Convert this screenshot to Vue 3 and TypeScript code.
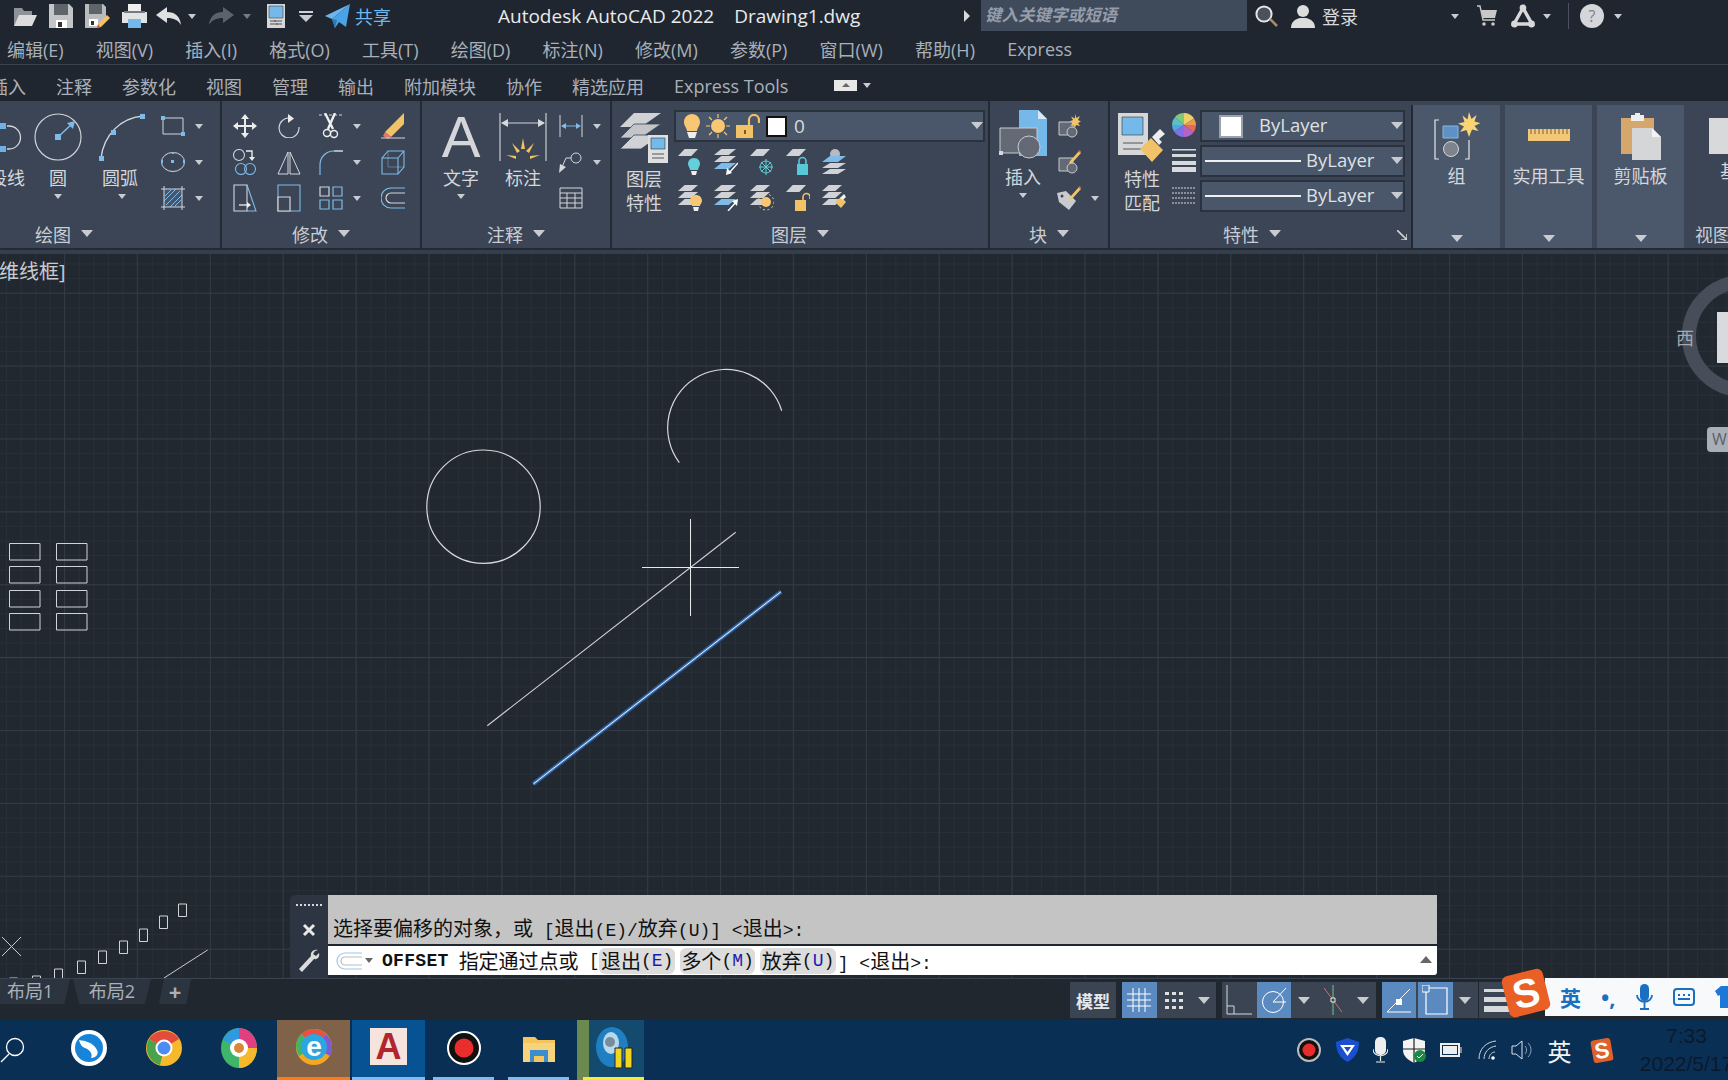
<script setup lang="ts">
const menus = ['编辑(E)', '视图(V)', '插入(I)', '格式(O)', '工具(T)', '绘图(D)', '标注(N)', '修改(M)', '参数(P)', '窗口(W)', '帮助(H)', 'Express']
const tabs = ['插入', '注释', '参数化', '视图', '管理', '输出', '附加模块', '协作', '精选应用', 'Express Tools']
const stairs = [[182, 910], [163, 922], [143, 935], [123, 947], [102, 957], [81, 967], [58, 975], [36, 982], [13, 984]]
const benches = [543, 566, 590, 613]
</script>

<template>
  <div class="page">
    <svg class="defs" width="0" height="0">
      <defs>
        <symbol id="para" viewBox="0 0 24 9" preserveAspectRatio="none"><path d="M8 0h16l-8 9H0z" fill="currentColor" /></symbol>
      </defs>
    </svg>

    <header class="titlebar">
      <div class="quick">
        <svg width="24" height="22" viewBox="0 0 24 22"><path d="M1 21V3h8l2 3h8v4H7z" fill="#8d9298" /><path d="M6 10h18l-5 11H1z" fill="#dcdcdc" /></svg>
        <svg width="24" height="24" viewBox="0 0 24 24"><path d="M0 0h20l4 4v20H0z" fill="#c3c5c8" /><path d="M5 0h14v11H5z" fill="#5f646b" /><path d="M7 16h11v8H7z" fill="#fff" /><path d="M9 18h4v5H9z" fill="#333" /></svg>
        <svg width="25" height="24" viewBox="0 0 25 24"><path d="M0 0h18l3 3v11l-9 10H0z" fill="#b9bbbe" /><path d="M4 0h13v10H4z" fill="#5f646b" /><path d="M4 15h9v7H4z" fill="#fff" /><path d="M6 17h3v4H6z" fill="#333" /><path d="M22 11l3 3-9 9-4 1 1-4z" fill="#f2c268" /><path d="M15 23l-3 1 1-4z" fill="#d9534f" /></svg>
        <svg width="25" height="24" viewBox="0 0 25 24"><path d="M6 0h13v7H6z" fill="#eee" /><path d="M0 8h25v11H0z" fill="#e2e3e5" /><path d="M6 15h13v9H6z" fill="#75b9ea" /><path d="M2 7h21v2H2z" fill="#77797c" /></svg>
        <div class="undo">
          <svg width="25" height="20" viewBox="0 0 25 20"><path d="M0 9 11 1v5c8 0 13 4 14 13-3-5-7-7-14-7v5z" fill="#dfe0e2" /></svg>
          <i class="caret sm" />
        </div>
        <div class="redo">
          <svg width="25" height="20" viewBox="0 0 25 20"><path d="M25 9 14 1v5C6 6 1 10 0 19c3-5 7-7 14-7v5z" fill="#5b626b" /></svg>
          <i class="caret sm dim" />
        </div>
        <svg width="18" height="24" viewBox="0 0 18 24"><path d="M0 0h18v24H0z" fill="#d6d7d9" /><path d="M2 2h14v12H2z" fill="#75b9ea" stroke="#444" stroke-width=".6" /><path d="M3 17h12M3 20h12" stroke="#555" stroke-width="1" /><path d="M8 16v2M10 19v2" stroke="#555" /></svg>
        <div class="qa-drop"><i class="bar" /><i class="caret" /></div>
        <svg width="25" height="24" viewBox="0 0 25 24"><path d="M25 0 0 12l7 3z" fill="#6cb8ee" /><path d="M25 0 7 15l3 9 4-6 7 5z" fill="#4aa3e6" /><path d="M7 15l3 9 2-8z" fill="#2d77b4" /></svg>
        <span class="share">共享</span>
      </div>
      <div class="doc">
        <span>Autodesk AutoCAD 2022</span>
        <span>Drawing1.dwg</span>
        <i class="play" />
      </div>
      <div class="search">键入关键字或短语</div>
      <div class="account">
        <svg class="mag" width="24" height="22" viewBox="0 0 24 22"><circle cx="9" cy="9" r="7.6" fill="#4a525d" stroke="#e6e6e6" stroke-width="2" /><path d="M15 14l7 7" stroke="#a98b66" stroke-width="2.5" /></svg>
        <svg class="user" width="24" height="24" viewBox="0 0 24 24"><circle cx="12" cy="7" r="6" fill="#dcdcdc" /><path d="M0 24c0-6 4-9 9-10h6c5 1 9 4 9 10z" fill="#dcdcdc" /></svg>
        <span class="login">登录</span>
        <i class="caret sm login-caret" />
        <svg class="cart" width="20" height="22" viewBox="0 0 20 22"><path d="M0 1h3l3 14h12" fill="none" stroke="#c8c8c8" stroke-width="1.4" /><path d="M4 5h16l-2 8H6z" fill="#c8c8c8" /><circle cx="7" cy="19" r="1.8" fill="#c8c8c8" /><circle cx="16" cy="19" r="1.8" fill="#c8c8c8" /></svg>
        <svg class="tri" width="24" height="24" viewBox="0 0 24 24"><path d="M12 4 3 20h18z" fill="none" stroke="#d8d8d8" stroke-width="3.4" /><circle cx="12" cy="4" r="3.4" fill="#d8d8d8" /><circle cx="3.5" cy="20" r="3.4" fill="#d8d8d8" /><circle cx="20.5" cy="20" r="3.4" fill="#d8d8d8" /></svg>
        <i class="caret sm tri-caret" />
        <i class="sep" />
        <div class="help">?</div>
        <i class="caret sm help-caret" />
      </div>
    </header>

    <nav class="menubar">
      <span v-for="m in menus" :key="m">{{ m }}</span>
    </nav>

    <nav class="tabbar">
      <span v-for="t in tabs" :key="t">{{ t }}</span>
      <i class="tab-toggle" />
      <i class="caret sm" />
    </nav>

    <section class="ribbon">
      <div class="panel draw">
        <div class="panel-body">
          <div class="big first">
            <svg width="48" height="48" viewBox="0 0 48 48"><path d="M24 13h2a11.500 11.500 0 0 1 0 23h-2" fill="none" stroke="#d5d8dc" stroke-width="1.300" /><path d="M17 10h6v6h-6zM17 33h6v6h-6z" fill="#6fb1e4" /></svg>
            <span class="lbl">段线</span>
          </div>
          <div class="big">
            <svg width="48" height="48" viewBox="0 0 48 48"><circle cx="24" cy="24" r="23" fill="none" stroke="#cfd3d8" stroke-width="1.200" /><path d="M24 24 39 10" stroke="#7fbbe8" stroke-width="1.500" /><path d="M41 8l-8 2 6 6z" fill="#7fbbe8" /><path d="M21 21h6v6h-6z" fill="#7fbbe8" /></svg>
            <span class="lbl">圆</span>
            <i class="caret sm" />
          </div>
          <div class="big arc">
            <svg width="48" height="48" viewBox="0 0 48 48"><path d="M3 45C6 22 22 5 45 3" fill="none" stroke="#d5d8dc" stroke-width="1.400" /><path d="M1 43h5v5H1zM13 17h5v5h-5zM42 1h5v5h-5z" fill="#7fbbe8" /></svg>
            <span class="lbl">圆弧</span>
            <i class="caret sm" />
          </div>
          <div class="tiny-col">
            <div class="tiny">
              <svg width="24" height="24" viewBox="0 0 24 24"><path d="M2 4h20v16H2z" fill="none" stroke="#d5d8dc" /><path d="M0 2h4v4H0zM20 18h4v4h-4z" fill="#7fbbe8" /></svg>
              <i class="caret sm" />
            </div>
            <div class="tiny">
              <svg width="24" height="24" viewBox="0 0 24 24"><ellipse cx="12" cy="12" rx="11.500" ry="9.500" fill="none" stroke="#d5d8dc" /><path d="M10 10h3v3h-3zM0 10h2v3H0zM11 2h2v2h-2zM22 10h2v3h-2z" fill="#7fbbe8" /></svg>
              <i class="caret sm" />
            </div>
            <div class="tiny">
              <svg width="24" height="24" viewBox="0 0 24 24"><path d="M3 3h18v18H3z" fill="#47566a" /><path d="M5 19 19 5M3 15 15 3M9 21 21 9M4 10l6-6M14 20l6-6" stroke="#7fbbe8" /><path d="M0 3h24M0 21h24M3 0v24M21 0v24" stroke="#d5d8dc" /></svg>
              <i class="caret sm" />
            </div>
          </div>
        </div>
        <div class="panel-title draw-title"><span>绘图</span><i class="caret" /></div>
      </div>

      <div class="panel modify">
        <div class="panel-body">
          <div class="tools">
            <svg width="24" height="24" viewBox="0 0 24 24"><path d="M12 0l4 5h-3v6h6V8l5 4-5 4v-3h-6v6h3l-4 5-4-5h3v-6H5v3l-5-4 5-4v3h6V5H8z" fill="#ececec" /></svg>
            <svg width="24" height="24" viewBox="0 0 24 24"><path d="M13 4a10 10 0 1 0 9 9" fill="none" stroke="#cfd3d8" stroke-width="1.200" /><path d="M11 0l6 4.500-6 4.500z" fill="#ececec" /></svg>
            <div class="with-caret">
              <svg width="24" height="26" viewBox="0 0 24 26"><path d="M0 2h24" stroke="#d5d8dc" stroke-dasharray="3 2" /><path d="M6 0l8 16M16 0 9 16" stroke="#f0f0f0" stroke-width="2.400" /><circle cx="8" cy="20" r="3.500" fill="none" stroke="#f0f0f0" stroke-width="1.400" /><circle cx="15" cy="21" r="3.500" fill="none" stroke="#f0f0f0" stroke-width="1.400" /></svg>
              <i class="caret sm" />
            </div>
            <svg width="24" height="26" viewBox="0 0 24 26"><path d="M23 0v11L10 24l-6-5z" fill="#f2c268" /><path d="M4 19l6 5-3 2-5-3z" fill="#e27770" /><path d="M0 25h24" stroke="#d5d8dc" /></svg>

            <svg width="24" height="26" viewBox="0 0 24 26"><circle cx="6" cy="6" r="5.500" fill="none" stroke="#cfd3d8" stroke-width="1.100" /><path d="M13 2h6v6" fill="none" stroke="#ececec" stroke-width="1.400" /><path d="M16 8h6l-3 4z" fill="#ececec" /><circle cx="8" cy="20" r="5.500" fill="none" stroke="#7fbbe8" stroke-width="1.100" /><circle cx="17" cy="20" r="5.500" fill="none" stroke="#7fbbe8" stroke-width="1.100" /></svg>
            <svg width="24" height="26" viewBox="0 0 24 26"><path d="M1 25 11 3v22zM13 3l10 22H13z" fill="none" stroke="#d5d8dc" /></svg>
            <div class="with-caret">
              <svg width="24" height="26" viewBox="0 0 24 26"><path d="M1 26V16C1 8 7 2 15 2h9" fill="none" stroke="#7fbbe8" stroke-width="1.200" /><path d="M15 2h9" stroke="#d5d8dc" stroke-width="1.200" /></svg>
              <i class="caret sm" />
            </div>
            <svg width="24" height="26" viewBox="0 0 24 26"><path d="M1 9h16v16H1zM1 9l6-7h16v16l-6 7M17 9l6-7" fill="none" stroke="#7fbbe8" stroke-width="1.100" /><path d="M7 2v16H23" fill="none" stroke="#a4c8e4" stroke-width=".4" /></svg>

            <svg width="24" height="28" viewBox="0 0 24 28"><path d="M1 1h13v26H1z" fill="none" stroke="#d5d8dc" stroke-width="1.100" /><path d="M14 1l9 26H14" fill="none" stroke="#7fbbe8" stroke-width="1.100" /><path d="M6 21h10" stroke="#f0f0f0" stroke-width="1.300" /><path d="M14 18l4 3-4 3z" fill="#f0f0f0" /></svg>
            <svg width="24" height="28" viewBox="0 0 24 28"><path d="M1 1h22v26H1z" fill="none" stroke="#7fbbe8" stroke-width="1.100" /><path d="M1 13h12v14H1z" fill="#3c4656" stroke="#d5d8dc" stroke-width="1.200" /></svg>
            <div class="with-caret">
              <svg width="24" height="24" viewBox="0 0 24 24"><path d="M14 1h9v9h-9zM1 14h9v9H1zM14 14h9v9h-9z" fill="none" stroke="#7fbbe8" stroke-width="1.200" /><path d="M1 1h9v9H1z" fill="none" stroke="#d5d8dc" stroke-width="1.200" /></svg>
              <i class="caret sm" />
            </div>
            <svg width="24" height="22" viewBox="0 0 24 22"><path d="M24 1H10a10 10 0 0 0 0 20h14" fill="none" stroke="#7fbbe8" stroke-width="1.200" /><path d="M24 6H10a5 5 0 0 0 0 10h14" fill="none" stroke="#d5d8dc" stroke-width="1.200" /></svg>
          </div>
        </div>
        <div class="panel-title"><span>修改</span><i class="caret" /></div>
      </div>

      <div class="panel annotate">
        <div class="panel-body">
          <div class="big text-tool">
            <div class="letter">A</div>
            <span class="lbl">文字</span>
            <i class="caret sm" />
          </div>
          <div class="big">
            <svg width="48" height="48" viewBox="0 0 48 48"><path d="M1 0v48M47 0v48M3 10h42" stroke="#d5d8dc" stroke-width="1.100" /><path d="M2 10l7-4v8zM46 10l-7-4v8z" fill="#d5d8dc" /><path d="M24 25l2 11h-4zM13 30l8 8-3 2zM35 30l-8 8 3 2zM7 42l10 1v3zM41 42l-10 1v3z" fill="#f2c268" /></svg>
            <span class="lbl">标注</span>
          </div>
          <div class="tiny-col gap12">
            <div class="tiny">
              <svg width="24" height="24" viewBox="0 0 24 24"><path d="M1 1v22M23 1v22" stroke="#d5d8dc" /><path d="M3 12h18" stroke="#7fbbe8" /><path d="M2 12l5-3v6zM22 12l-5-3v6z" fill="#7fbbe8" /></svg>
              <i class="caret sm" />
            </div>
            <div class="tiny">
              <svg width="24" height="24" viewBox="0 0 24 24"><circle cx="17" cy="8" r="5" fill="none" stroke="#d5d8dc" /><path d="M12 8H7L3 17" fill="none" stroke="#d5d8dc" /><path d="M0 23l1-9 6 3z" fill="#d5d8dc" /></svg>
              <i class="caret sm" />
            </div>
            <div class="tiny">
              <svg width="24" height="24" viewBox="0 0 24 24"><path d="M1 2h22v20H1zM1 7h22M1 12h22M1 17h22M8 7v15M16 7v15" fill="none" stroke="#d5d8dc" /></svg>
            </div>
          </div>
        </div>
        <div class="panel-title"><span>注释</span><i class="caret" /></div>
      </div>

      <div class="panel layers">
        <div class="panel-body">
          <div class="big stacked">
            <svg width="48" height="50" viewBox="0 0 48 50"><path d="M14 0h27L21 14H0z" fill="#d0d2d5" /><path d="M14 11h27L21 25H0z" fill="#c3c5c9" stroke="#3b4555" stroke-width=".8" /><path d="M14 22h27L21 36H0z" fill="#d0d2d5" stroke="#3b4555" stroke-width=".8" /><path d="M28 22h20v28H28z" fill="#dedfe1" /><path d="M31 25h14v11H31z" fill="#75b9ea" stroke="#333" stroke-width=".6" /><path d="M32 41h12M32 45h12" stroke="#555" /></svg>
            <span class="lbl">图层<br>特性</span>
          </div>
          <div class="layer-side">
            <div class="combo layer-combo">
              <svg width="16" height="24" viewBox="0 0 16 24"><path d="M8 0c5 0 8 4 8 8 0 4-3 6-3 9H3c0-3-3-5-3-9 0-4 3-8 8-8z" fill="#f7c774" /><path d="M3 18h10l-2 6H5z" fill="#eee" /></svg>
              <svg width="24" height="24" viewBox="0 0 24 24"><circle cx="12" cy="12" r="7" fill="#f7c774" /><path d="M12 0v4M12 20v4M0 12h4M20 12h4M3 3l3 3M18 18l3 3M21 3l-3 3M6 18l-3 3" stroke="#f7c774" stroke-width="1.200" /></svg>
              <svg width="24" height="24" viewBox="0 0 24 24"><path d="M0 11h17v13H0z" fill="#f2c268" /><path d="M8 16h2v4H8z" fill="#7d5b1f" /><path d="M13 11V6a5 5 0 0 1 10 0v3" fill="none" stroke="#f2c268" stroke-width="2.200" /></svg>
              <i class="swatch" />
              <span class="layer-name">0</span>
              <i class="caret combo-caret" />
            </div>
            <div class="layer-grid">
              <svg width="24" height="26" viewBox="0 0 24 26"><use href="#para" width="20" height="7" color="#d0d2d5" /><path d="M16 9c4 0 6 3 6 6 0 2-2 4-2 6h-8c0-2-2-4-2-6 0-3 2-6 6-6z" fill="#63d0d9" /><path d="M13 22h6l-1 4h-4z" fill="#eee" /></svg>
              <svg width="24" height="26" viewBox="0 0 24 26"><use href="#para" width="22" height="6" color="#d0d2d5" /><use href="#para" y="7" width="22" height="6" color="#d0d2d5" /><use href="#para" y="14" width="22" height="6" color="#7fbbe8" /><path d="M24 14 15 24" stroke="#fff" stroke-width="1.400" /><path d="M12 26l1-7 5 5z" fill="#fff" /></svg>
              <svg width="24" height="26" viewBox="0 0 24 26"><use href="#para" width="20" height="7" color="#d0d2d5" /><circle cx="16" cy="18" r="6" fill="none" stroke="#5ed0d8" /><path d="M16 10v16M9 18h14M11 13l10 10M21 13 11 23" stroke="#5ed0d8" /></svg>
              <svg width="24" height="26" viewBox="0 0 24 26"><use href="#para" width="20" height="7" color="#d0d2d5" /><path d="M11 15h11v11H11z" fill="#58c7d6" /><path d="M13 15v-3a3.500 3.500 0 0 1 7 0v3" fill="none" stroke="#58c7d6" stroke-width="1.600" /></svg>
              <svg width="24" height="26" viewBox="0 0 24 26"><circle cx="13" cy="5" r="5" fill="#b7bbc1" /><use href="#para" y="7" width="24" height="6" color="#7fbbe8" /><use href="#para" y="14" width="24" height="5" color="#d0d2d5" /><use href="#para" y="20" width="24" height="5" color="#d0d2d5" /></svg>

              <svg width="24" height="26" viewBox="0 0 24 26"><use href="#para" width="20" height="6" color="#d0d2d5" /><use href="#para" y="7" width="20" height="6" color="#d0d2d5" /><use href="#para" y="14" width="20" height="6" color="#d0d2d5" /><path d="M18 10c3 0 6 2 6 6 0 2-2 3-2 5h-8c0-2-2-3-2-5 0-4 3-6 6-6z" fill="#f7c774" /><path d="M15 22h6l-1 4h-4z" fill="#eee" /></svg>
              <svg width="24" height="26" viewBox="0 0 24 26"><use href="#para" width="22" height="6" color="#d0d2d5" /><use href="#para" y="7" width="22" height="6" color="#d0d2d5" /><use href="#para" y="14" width="22" height="6" color="#7fbbe8" /><path d="M14 26 23 16" stroke="#fff" stroke-width="1.400" /><path d="M24 14l-1 7-5-5z" fill="#fff" /></svg>
              <svg width="24" height="26" viewBox="0 0 24 26"><use href="#para" width="20" height="6" color="#d0d2d5" /><use href="#para" y="7" width="20" height="6" color="#d0d2d5" /><use href="#para" y="14" width="20" height="6" color="#d0d2d5" /><circle cx="16" cy="17" r="5" fill="#f7c774" /><circle cx="16" cy="17" r="8" fill="none" stroke="#f7c774" stroke-dasharray="2 2.500" /></svg>
              <svg width="24" height="26" viewBox="0 0 24 26"><use href="#para" width="20" height="7" color="#d0d2d5" /><path d="M9 15h11v11H9z" fill="#f2c268" /><path d="M17 15v-3a3.500 3.500 0 0 1 7 0v2" fill="none" stroke="#f2c268" stroke-width="1.600" /></svg>
              <svg width="24" height="26" viewBox="0 0 24 26"><use href="#para" width="20" height="6" color="#d0d2d5" /><use href="#para" y="7" width="20" height="6" color="#d0d2d5" /><use href="#para" y="14" width="20" height="6" color="#d0d2d5" /><path d="M13 17l6-5 5 5-5 6z" fill="#f2c268" /><path d="M18 13l4-4 2 3-3 3z" fill="#f0f0f0" /></svg>
            </div>
          </div>
        </div>
        <div class="panel-title"><span>图层</span><i class="caret" /></div>
      </div>

      <div class="panel blocks">
        <div class="panel-body">
          <div class="big insert">
            <svg width="48" height="50" viewBox="0 0 48 50"><path d="M20 0h19l9 9v37H20z" fill="#75b9ea" /><path d="M39 0l9 9h-9z" fill="#d7e9f7" /><path d="M1 18h37v25H1z" fill="#646a75" stroke="#c8ccd1" /><circle cx="30" cy="37" r="11" fill="#646a75" stroke="#c8ccd1" /><path d="M0 41h4v4H0z" fill="#d5d8dc" /></svg>
            <span class="lbl">插入</span>
            <i class="caret sm" />
          </div>
          <div class="tiny-col block-col">
            <div class="tiny">
              <svg width="24" height="24" viewBox="0 0 24 24"><path d="M2 8h14v13H2z" fill="#646a75" stroke="#c8ccd1" /><circle cx="15" cy="18" r="5" fill="#646a75" stroke="#c8ccd1" /><path d="M18 0l1.500 4 3.500-2-2 4 3 1.500-3 1.500 2 3-4-1-1 3-1.500-3-3 1 2-3.500-3-1 3.500-1.500-2-3.500 4 2z" fill="#f2c268" /></svg>
            </div>
            <div class="tiny">
              <svg width="24" height="24" viewBox="0 0 24 24"><path d="M2 8h14v13H2z" fill="#646a75" stroke="#c8ccd1" /><circle cx="15" cy="18" r="5" fill="#646a75" stroke="#c8ccd1" /><path d="M22 1l2 2-9 10-3 1 1-3z" fill="#f2c268" /><path d="M21 1l2-1 1 2-1 1z" fill="#d9605a" /></svg>
            </div>
            <div class="tiny">
              <svg width="24" height="24" viewBox="0 0 24 24"><path d="M0 7 9 5l10 10-7 9-10-8z" fill="#c9cbce" /><circle cx="5" cy="10" r="1.500" fill="#3b4555" /><path d="M22 1l2 2-9 10-3 1 1-3z" fill="#f2c268" /><path d="M21 1l2-1 1 2-1 1z" fill="#d9605a" /></svg>
              <i class="caret sm" />
            </div>
          </div>
        </div>
        <div class="panel-title"><span>块</span><i class="caret" /></div>
      </div>

      <div class="panel props">
        <div class="panel-body">
          <div class="big stacked">
            <svg width="48" height="50" viewBox="0 0 48 50"><path d="M0 0h30v42H0z" fill="#d6d7d9" /><path d="M4 4h21v18H4z" fill="#75b9ea" stroke="#333" stroke-width=".6" /><path d="M5 30h20M5 36h20" stroke="#555" /><path d="M22 36l11-11 12 12-11 12z" fill="#f2c268" /><path d="M34 24l8-8 5 5-6 5 3 3-3 3z" fill="#eee" /></svg>
            <span class="lbl">特性<br>匹配</span>
          </div>
          <div class="prop-icons">
            <svg width="24" height="24" viewBox="0 0 24 24"><path d="M12 12V0a12 12 0 0 1 10 5.500z" fill="#ecd26a" /><path d="M12 12l10-6.500A12 12 0 0 1 24 12z" fill="#ec9a4c" /><path d="M12 12h12a12 12 0 0 1-2.500 7.500z" fill="#e56a5b" /><path d="M12 12l9.500 7.500A12 12 0 0 1 12 24z" fill="#b364c9" /><path d="M12 12v12A12 12 0 0 1 2 18.500z" fill="#7f70e6" /><path d="M12 12 2 18.500A12 12 0 0 1 0 12z" fill="#57a3e8" /><path d="M12 12H0A12 12 0 0 1 3 4z" fill="#5bc1c8" /><path d="M12 12 3 4a12 12 0 0 1 9-4z" fill="#7fca79" /></svg>
            <svg width="24" height="24" viewBox="0 0 24 24"><path d="M0 1h24v1.500H0zM0 6h24v3H0zM0 13h24v4H0zM0 19h24v5H0z" fill="#d8d9db" /></svg>
            <svg width="24" height="18" viewBox="0 0 24 18"><path d="M0 1h24M0 6h24M0 11h24M0 16h24" stroke="#d8d9db" stroke-dasharray="2 1" /></svg>
          </div>
          <div class="prop-combos">
            <div class="combo prop-combo">
              <i class="swatch wide" />
              <span class="by first-by">ByLayer</span>
              <i class="caret combo-caret" />
            </div>
            <div class="combo prop-combo">
              <i class="line-sample" />
              <span class="by">ByLayer</span>
              <i class="caret combo-caret" />
            </div>
            <div class="combo prop-combo">
              <i class="line-sample" />
              <span class="by">ByLayer</span>
              <i class="caret combo-caret" />
            </div>
          </div>
        </div>
        <div class="panel-title props-title">
          <span>特性</span><i class="caret" />
          <svg class="launcher" width="10" height="10" viewBox="0 0 10 10"><path d="M0 0l10 10M10 4v6H4" fill="none" stroke="#cfd3d8" stroke-width="1.600" /></svg>
        </div>
      </div>

      <div class="collapsed">
        <svg width="46" height="48" viewBox="0 0 46 48"><path d="M5 8H1v39h4M31 47h4V28" fill="none" stroke="#e6e6e6" stroke-width="1.200" /><path d="M9 14h15v12H9z" fill="#5e92c4" stroke="#86b6e0" /><circle cx="17" cy="37" r="7.500" fill="#7e838c" stroke="#d5d8dc" /><path d="M35 0l2.500 7 5-4-2 6.500 6 1.500-6 3 4 5-6.500-1.500L35 25l-2.500-7-6.500 2 4-5.500-6-3 6.500-1.500-2-6.500 5 4z" fill="#f9d477" /></svg>
        <span class="lbl">组</span>
        <i class="caret" />
      </div>
      <div class="collapsed">
        <svg class="ruler" width="44" height="48" viewBox="0 0 44 48"><path d="M1 17h42v12H1z" fill="#f2c876" /><path d="M4 17v5M8 17v5M12 17v5M16 17v5M20 17v5M24 17v5M28 17v5M32 17v5M36 17v5M40 17v5" stroke="#7a6334" /></svg>
        <span class="lbl">实用工具</span>
        <i class="caret" />
      </div>
      <div class="collapsed">
        <svg width="40" height="48" viewBox="0 0 40 48"><path d="M0 6h33v36H0z" fill="#d5a76c" /><path d="M10 3h13v6H10z" fill="#eee" /><path d="M14 1h5v4h-5z" fill="#eee" /><path d="M11 16h20l9 9v23H11z" fill="#d4d6d8" /><path d="M31 16l9 9h-9z" fill="#f2f2f2" /></svg>
        <span class="lbl">剪贴板</span>
        <i class="caret" />
      </div>
      <div class="panel last">
        <div class="panel-body">
          <div class="big">
            <i class="white-block" />
            <span class="lbl">基</span>
          </div>
        </div>
        <div class="panel-title"><span>视图</span></div>
      </div>
    </section>

    <div class="strip" />

    <main class="canvas">
      <svg class="drawing" width="1728" height="724" viewBox="0 254 1728 724">
        <path d="M0 657.500h1728" stroke="#5d2e33" />
        <circle cx="483.500" cy="506.700" r="56.700" fill="none" stroke="#d7d9dc" stroke-width="1.200" />
        <path d="M679.300 462.700A58.300 58.300 0 1 1 781.700 410.700" fill="none" stroke="#d7d9dc" stroke-width="1.200" />
        <path d="M487.300 725.700 735.700 532.300" stroke="#d0d2d5" stroke-width="1.100" />
        <path d="M533.300 784 781 591.700" stroke="#26456f" stroke-width="5" />
        <path d="M533.300 784 781 591.700" stroke="#3f74b6" stroke-width="3" />
        <path d="M533.300 784 781 591.700" stroke="#e6f2ff" stroke-width="1" />
        <path d="M642 567.500h97M690.500 519v97" stroke="#e6e8ea" />
        <template v-for="y in benches" :key="y">
          <path :d="`M9.500 ${y}.5H40V${y + 17}H9.500z`" fill="none" stroke="#d0d3d7" />
          <path :d="`M56.500 ${y}.5H87V${y + 17}H56.500z`" fill="none" stroke="#d0d3d7" />
        </template>
        <path v-for="s in stairs" :key="s[0]" :d="`M${s[0] - 3.5} ${s[1] - 6}h8v12.500h-8z`" fill="none" stroke="#d0d3d7" />
        <path d="M2 937 21 956M21 937 2 956M164 978 207.600 950" stroke="#c9ccd0" />
      </svg>
      <div class="view-label">二维线框]</div>
      <div class="cube-ring" />
      <div class="cube-west">西</div>
      <div class="cube-face" />
      <div class="wcs">W</div>

      <div class="command">
        <div class="cmd-handle">
          <i class="dots" />
          <svg width="14" height="14" viewBox="0 0 14 14"><path d="M2 2l10 10M12 2 2 12" stroke="#e8e8e8" stroke-width="3" /></svg>
          <svg width="22" height="24" viewBox="0 0 22 24"><path d="M20 1c-4-1-8 2-7 6L1 20l3 3L16 10c4 1 6-3 5-6l-3 3-3-2 2-3z" fill="#dcdcdc" /></svg>
        </div>
        <div class="cmd-main">
          <div class="cmd-history"><span class="cn">选择要偏移的对象，或</span> [<span class="cn">退出</span>(E)/<span class="cn">放弃</span>(U)] &lt;<span class="cn">退出</span>&gt;:</div>
          <div class="cmd-input">
            <svg width="27" height="18" viewBox="0 0 27 18"><path d="M27 1H10a8 8 0 0 0 0 16h17" fill="none" stroke="#9cc8ea" stroke-width="1.200" /><path d="M27 5H10a4 4 0 0 0 0 8h17" fill="none" stroke="#bbb" stroke-width="1.200" /></svg>
            <i class="caret sm dark" />
            <b>OFFSET</b>
            <span class="cn cmd-hint">指定通过点或</span>
            <span class="bracket">[</span>
            <span class="pill"><span class="cn">退出</span>(<em>E</em>)</span>
            <span class="pill"><span class="cn">多个</span>(<em>M</em>)</span>
            <span class="pill"><span class="cn">放弃</span>(<em>U</em>)</span>
            <span>] &lt;<span class="cn">退出</span>&gt;:</span>
            <i class="cmd-up" />
          </div>
        </div>
      </div>
    </main>

    <div class="statusrow">
      <div class="layout-tabs">
        <span class="ltab one">布局1</span>
        <span class="ltab two">布局2</span>
        <span class="ltab plus">+</span>
      </div>
      <div class="statusbar">
        <div class="sbox model">模型</div>
        <div class="sbox">
          <span class="cell on"><svg width="24" height="24" viewBox="0 0 24 24"><path d="M0 6h24M0 12h24M0 18h24M6 0v24M12 0v24M18 0v24" stroke="#fff" /></svg></span>
          <span class="cell"><svg width="20" height="20" viewBox="0 0 20 20"><path d="M1 2h4v3H1zM8 2h4v3H8zM15 2h4v3h-4zM1 9h4v3H1zM8 9h4v3H8zM15 9h4v3h-4zM1 16h4v3H1zM8 16h4v3H8zM15 16h4v3h-4z" fill="#e0e0e0" /></svg></span>
          <span class="cell cc"><i class="caret" /></span>
        </div>
        <div class="sbox">
          <span class="cell"><svg width="26" height="30" viewBox="0 0 26 30"><path d="M1 0v29h25" fill="none" stroke="#d5d8dc" /><path d="M1 21h7v8" fill="none" stroke="#d5d8dc" /></svg></span>
          <span class="cell on"><svg width="26" height="26" viewBox="0 0 26 26"><circle cx="12" cy="15" r="10.500" fill="none" stroke="#fff" /><path d="M12 15 25 1M12 15h13" stroke="#fff" /></svg></span>
          <span class="cell cc"><i class="caret" /></span>
          <span class="cell"><svg width="20" height="30" viewBox="0 0 20 30"><path d="M10 0v30" stroke="#6fc98a" /><path d="M1 3l18 24" stroke="#c96f7a" /><path d="M8 13h4v4H8z" fill="#3c4656" stroke="#eee" /></svg></span>
          <span class="cell cc"><i class="caret" /></span>
        </div>
        <div class="sbox">
          <span class="cell on"><svg width="26" height="26" viewBox="0 0 26 26"><path d="M1 25 24 2M1 25h24" stroke="#fff" /><path d="M10 12h6v6h-6z" fill="#fff" /></svg></span>
          <span class="cell on second"><svg width="26" height="30" viewBox="0 0 26 30"><path d="M4 3h21v26H4z" fill="none" stroke="#fff" stroke-width="1.200" /><path d="M0 0h7v7H0z" fill="#5b8ac0" stroke="#fff" /></svg></span>
          <span class="cell cc"><i class="caret" /></span>
        </div>
        <div class="sbox lines">
          <svg width="26" height="24" viewBox="0 0 26 24"><path d="M0 1h26v3H0zM0 9h26v5H0zM0 18h26v6H0z" fill="#d8d9db" /></svg>
        </div>
      </div>
      <div class="ime">
        <span class="ime-cn">英</span>
        <span class="ime-punct">•,</span>
        <svg width="17" height="26" viewBox="0 0 17 26"><rect x="4" y="0" width="9" height="17" rx="4.500" fill="#1b6fc2" /><path d="M1 11c0 9 15 9 15 0M8.500 18v6M4 25h9" fill="none" stroke="#1b6fc2" stroke-width="1.800" /></svg>
        <svg width="22" height="18" viewBox="0 0 22 18"><rect x="1" y="1" width="20" height="16" rx="3" fill="none" stroke="#1b6fc2" stroke-width="2" /><path d="M5 6h2v2H5zM10 6h2v2h-2zM15 6h2v2h-2zM5 10h12v2H5z" fill="#1b6fc2" /></svg>
        <svg width="22" height="22" viewBox="0 0 22 22"><path d="M6 0h10l6 5-3 5-2-1v13H5V9l-2 1-3-5z" fill="#1b78d6" /></svg>
      </div>
      <div class="sogou"><span>S</span></div>
    </div>

    <footer class="taskbar">
      <div class="tb-search">
        <svg width="26" height="26" viewBox="0 0 26 26"><circle cx="15" cy="10" r="8.500" fill="none" stroke="#fff" stroke-width="1.300" /><path d="M9 17 1 25" stroke="#fff" stroke-width="1.300" /></svg>
      </div>
      <div class="tile">
        <svg width="36" height="36" viewBox="0 0 36 36"><circle cx="18" cy="18" r="18" fill="#fff" /><circle cx="18" cy="18" r="14" fill="#1784d9" /><path d="M8 10c6 1 14 2 18 10 2 4-1 8-6 8 2-4-1-8-6-10-3-1-5-4-6-8z" fill="#fff" /></svg>
      </div>
      <div class="tile">
        <svg width="36" height="36" viewBox="0 0 36 36"><circle cx="18" cy="18" r="18" fill="#f6b92b" /><path d="M18 18 3 9A18 18 0 0 1 33 9z" fill="#e34b3c" /><path d="M18 18 3 9A18 18 0 0 0 14 35z" fill="#4aa34b" /><circle cx="18" cy="18" r="8.500" fill="#fff" /><circle cx="18" cy="18" r="6.500" fill="#4a8cf0" /></svg>
      </div>
      <div class="tile">
        <svg width="36" height="40" viewBox="0 0 36 40"><ellipse cx="18" cy="20" rx="18" ry="20" fill="#3fb56a" /><path d="M18 0a18 20 0 0 1 18 20H18z" fill="#e33f80" /><path d="M36 20a18 20 0 0 1-18 20V20z" fill="#f6b92b" /><path d="M18 0A18 20 0 0 0 2 12l16 8z" fill="#2f9ae0" /><circle cx="18" cy="20" r="9" fill="#fff" /><circle cx="18" cy="20" r="5" fill="#d9883a" /></svg>
      </div>
      <div class="tile ie">
        <svg width="36" height="36" viewBox="0 0 36 36"><circle cx="18" cy="18" r="18" fill="#f5a623" /><path d="M18 18 5 5A18 18 0 0 1 30 5z" fill="#e9503f" /><path d="M18 18 30 5a18 18 0 0 1 4 22z" fill="#7f5bd0" /><path d="M18 18 5 5a18 18 0 0 0-2 22z" fill="#3fb56a" /><circle cx="18" cy="18" r="13" fill="#2aa6e0" /><text x="18" y="27" text-anchor="middle" class="ie-e">e</text></svg>
      </div>
      <div class="tile acad">
        <div class="acad-logo">A</div>
      </div>
      <div class="tile inset">
        <svg width="34" height="34" viewBox="0 0 34 34"><circle cx="17" cy="17" r="16" fill="#111" stroke="#fff" stroke-width="2" /><circle cx="17" cy="17" r="9.500" fill="#ea2d2d" /></svg>
      </div>
      <div class="tile inset">
        <svg width="32" height="27" viewBox="0 0 32 27"><path d="M0 2h12l3 3h17v22H0z" fill="#f5c55d" /><path d="M0 8h32v19H0z" fill="#f7d47c" /><path d="M7 15h18v12H7z" fill="#3a8ed0" /><path d="M11 21h10v6H11z" fill="#f5c55d" /></svg>
      </div>
      <div class="tile inset yellow">
        <svg width="38" height="44" viewBox="0 0 38 44"><ellipse cx="17" cy="21" rx="16" ry="20" fill="#1f7fc1" /><ellipse cx="16" cy="17" rx="8" ry="11" fill="#b7d9ee" /><circle cx="15" cy="16" r="5" fill="#7a8c99" /><path d="M20 22h7v20h-7zM30 22h7v20h-7z" fill="#f1d51e" stroke="#222" /></svg>
      </div>
      <div class="tray">
        <svg width="24" height="24" viewBox="0 0 24 24"><circle cx="12" cy="12" r="11" fill="#111" stroke="#bbb" stroke-width="2" /><circle cx="12" cy="12" r="6.500" fill="#e72c2c" /></svg>
        <svg width="23" height="24" viewBox="0 0 23 24"><path d="M11.500 0 23 4c0 10-4 16-11.500 20C4 20 0 14 0 4z" fill="#1a4fd0" /><path d="M4 7h15l-7.500 11z" fill="#fff" /><path d="M8 9h7l-3.500 5z" fill="#1a4fd0" /></svg>
        <svg width="15" height="26" viewBox="0 0 15 26"><rect x="2" y="0" width="11" height="18" rx="5" fill="#eee" /><path d="M0 12c0 9 15 9 15 0M7.500 19v5M3 25h9" fill="none" stroke="#eee" stroke-width="1.200" /></svg>
        <svg width="23" height="25" viewBox="0 0 23 25"><path d="M11 0 22 3v9c0 6-5 10-11 13C5 22 0 18 0 12V3z" fill="#f4f4f4" /><path d="M11 0v25M0 11h22" stroke="#222" stroke-width="1.200" /><circle cx="17" cy="18" r="6" fill="#178a44" /><path d="M14 18l2 2 4-4" stroke="#fff" fill="none" /></svg>
        <svg width="22" height="14" viewBox="0 0 22 14"><path d="M0 0h20v14H0z" fill="#eee" /><path d="M2 2h16v10H2z" fill="#0a2f55" /><path d="M3 3h14v8H3z" fill="#eee" /><path d="M20 4h2v6h-2z" fill="#888" /></svg>
        <svg width="20" height="20" viewBox="0 0 20 20"><path d="M2 19C2 9 9 2 19 1M7 19c0-7 5-12 12-13M12 19c0-3 2-7 6-7" fill="none" stroke="#cfd3d8" /><circle cx="16" cy="18" r="1.800" fill="#fff" /></svg>
        <svg width="22" height="20" viewBox="0 0 22 20"><path d="M1 6h4l6-5v18l-6-5H1z" fill="none" stroke="#dfe2e5" /><path d="M14 6c2 2 2 6 0 8M17 3c4 4 4 10 0 14" fill="none" stroke="#8fa3b8" /></svg>
        <span class="tray-ime">英</span>
        <div class="tray-sogou"><span>S</span></div>
        <div class="clock"><span>7:33</span><span>2022/5/17</span></div>
      </div>
    </footer>
  </div>
</template>

<style scoped>
.page {
  width: 1728px;
  height: 1080px;
  overflow: hidden;
  display: flex;
  flex-direction: column;
  position: relative;
  background: #1f2630;
  font-family: "Open Sans", "Noto Sans CJK SC", sans-serif;
  color: #c4c9d0;
}

.defs {
  position: absolute;
}

i {
  display: block;
  flex: none;
}

svg {
  flex: none;
  display: block;
}

.caret {
  width: 0;
  height: 0;
  border-left: 6px solid transparent;
  border-right: 6px solid transparent;
  border-top: 7px solid #c8ccd1;
}

.caret.sm {
  border-left-width: 4px;
  border-right-width: 4px;
  border-top-width: 5px;
}

.caret.dim {
  border-top-color: #767c85;
}

.caret.dark {
  border-top-color: #666;
}

/* title bar */
.titlebar {
  height: 32px;
  flex: none;
  display: flex;
  align-items: center;
  background: #1f2630;
}

.quick {
  width: 498px;
  flex: none;
  display: flex;
  align-items: center;
  gap: 12px;
  padding-left: 13px;
  box-sizing: border-box;
}

.undo {
  display: flex;
  align-items: center;
  gap: 7px;
  margin-left: -3px;
  margin-right: 1px;
}

.redo {
  display: flex;
  align-items: center;
  gap: 9px;
  margin-right: 4px;
}

.qa-drop {
  width: 14px;
  margin: 0 0 0 2px;
  display: flex;
  flex-direction: column;
  gap: 2px;
  align-items: center;
}

.qa-drop .bar {
  width: 14px;
  height: 2px;
  background: #cfd3d8;
}

.qa-drop .caret {
  border-left-width: 7px;
  border-right-width: 7px;
  border-top-width: 7px;
}

.share {
  font-size: 18px;
  color: #6cb8ee;
  margin-left: -7px;
}

.doc {
  width: 483px;
  flex: none;
  display: flex;
  align-items: center;
  gap: 20px;
  font-size: 19px;
  color: #e8eaec;
  white-space: nowrap;
}

.play {
  width: 0;
  height: 0;
  margin-left: 84px;
  border-top: 6px solid transparent;
  border-bottom: 6px solid transparent;
  border-left: 6px solid #d8d8d8;
}

.search {
  width: 266px;
  height: 31px;
  flex: none;
  margin-top: -1px;
  box-sizing: border-box;
  padding-left: 4px;
  background: #3f4a5a;
  color: #959daa;
  font-size: 16.5px;
  font-weight: 700;
  font-style: italic;
  line-height: 29px;
}

.account {
  display: flex;
  align-items: center;
  flex: 1;
  padding-left: 8px;
}

.user {
  margin-left: 12px;
}

.login {
  font-size: 18px;
  color: #d8dadd;
  margin-left: 7px;
}

.login-caret {
  margin-left: 93px;
}

.cart {
  margin-left: 18px;
}

.tri {
  margin-left: 14px;
}

.tri-caret {
  margin-left: 8px;
}

.sep {
  width: 1px;
  height: 26px;
  background: #4a525d;
  margin-left: 17px;
}

.help {
  width: 24px;
  height: 24px;
  margin-left: 11px;
  border-radius: 50%;
  background: #d4d6d9;
  color: #7c828b;
  font-size: 16px;
  line-height: 24px;
  text-align: center;
}

.help-caret {
  margin-left: 10px;
}

/* menus */
.menubar {
  height: 33px;
  flex: none;
  box-sizing: border-box;
  border-bottom: 1px solid #3a4450;
  padding-top: 1px;
  display: flex;
  align-items: center;
  gap: 32.2px;
  padding-left: 7px;
  font-size: 18px;
  color: #a9b0ba;
  white-space: nowrap;
}

.tabbar {
  height: 36px;
  flex: none;
  box-sizing: border-box;
  display: flex;
  align-items: center;
  gap: 30px;
  padding-top: 5px;
  margin-left: -10px;
  font-size: 18px;
  color: #a9b0ba;
  white-space: nowrap;
}

.tab-toggle {
  width: 23px;
  height: 11px;
  margin-left: 16px;
  background: #e8e8e8;
  position: relative;
}

.tab-toggle::after {
  content: "";
  position: absolute;
  left: 8px;
  top: 3px;
  border-left: 4px solid transparent;
  border-right: 4px solid transparent;
  border-bottom: 4px solid #666;
}

.tabbar .caret {
  margin-left: -24px;
}

/* ribbon */
.ribbon {
  height: 147px;
  flex: none;
  display: flex;
  background: #3b4555;
  border-bottom: 0;
  overflow: hidden;
}

.panel {
  flex: none;
  box-sizing: border-box;
  display: flex;
  flex-direction: column;
  border-right: 2px solid #232a33;
}

.panel-body {
  height: 120px;
  display: flex;
}

.panel-title {
  height: 25px;
  display: flex;
  align-items: center;
  justify-content: center;
  gap: 10px;
  font-size: 18px;
  color: #c9cdd3;
  position: relative;
}

.draw-title {
  justify-content: flex-start;
  padding-left: 35px;
}

.draw { width: 222px; }
.modify { width: 200px; }
.annotate { width: 190px; }
.layers { width: 378px; }
.blocks { width: 120px; }
.props { width: 303px; border-right: 0; }

.big {
  width: 48px;
  flex: none;
  display: flex;
  flex-direction: column;
  align-items: center;
  padding-top: 12px;
}

.big .lbl {
  margin-top: 7px;
}

.big .caret {
  margin-top: 6px;
}

.lbl {
  font-size: 18px;
  line-height: 20px;
  color: #d4d7db;
  white-space: nowrap;
}

.first {
  margin-left: -17px;
  margin-right: 3px;
}

.arc {
  margin-left: 16px;
  margin-right: 15px;
}

.arc .lbl {
  margin-right: 4px;
}

.tiny-col {
  flex: none;
  padding-top: 7px;
  display: flex;
  flex-direction: column;
}

.tiny {
  height: 36px;
  display: flex;
  align-items: center;
  gap: 10px;
}

.tools {
  display: grid;
  grid-template-columns: 44px 42px 62px 24px;
  grid-auto-rows: 36px;
  align-items: center;
  padding: 7px 0 0 11px;
}

.with-caret {
  display: flex;
  align-items: center;
  gap: 10px;
}

.text-tool {
  margin-left: 15px;
  margin-right: 14px;
  padding-top: 6px;
}

.letter {
  height: 54px;
  font-family: "Liberation Sans", sans-serif;
  font-size: 58px;
  line-height: 60px;
  color: #d4d6d9;
}

.gap12 {
  margin-left: 12px;
}

.stacked {
  margin-left: 8px;
}

.stacked svg + .lbl {
  margin-top: 4px;
  line-height: 24px;
  text-align: center;
}

.combo {
  display: flex;
  align-items: center;
  box-sizing: border-box;
  background: #4a5669;
  border: 2px solid #2a3240;
  position: relative;
}

.layer-side {
  margin-left: 6px;
  padding-top: 9px;
}

.layer-combo {
  width: 311px;
  height: 32px;
  padding-left: 8px;
  gap: 6px;
}

.swatch {
  width: 21px;
  height: 21px;
  background: #fff;
  border: 2px solid #111;
  box-sizing: border-box;
}

.swatch.wide {
  width: 24px;
  height: 23px;
  border-color: #9ca2ab;
}

.layer-name {
  font-size: 19px;
  margin-left: 1px;
  color: #d8dadd;
}

.combo-caret {
  position: absolute;
  right: 0;
  top: 10px;
  border-left-width: 6px;
  border-right-width: 6px;
}

.layer-grid {
  display: grid;
  grid-template-columns: repeat(5, 24px);
  grid-auto-rows: 26px;
  column-gap: 12px;
  row-gap: 10px;
  margin: 7px 0 0 4px;
}

.insert {
  margin-left: 9px;
  padding-top: 9px;
}

.insert .lbl {
  margin-top: 7px;
}

.block-col {
  margin-left: 10px;
}

.prop-icons {
  width: 24px;
  margin-left: 6px;
  padding-top: 12px;
  display: flex;
  flex-direction: column;
  gap: 11px;
}

.prop-icons svg:last-child {
  margin-top: 4px;
}

.prop-combos {
  margin-left: 4px;
  padding-top: 9px;
  display: flex;
  flex-direction: column;
  gap: 3px;
}

.prop-combo {
  width: 205px;
  height: 32px;
  line-height: 26px;
}

.prop-combo .swatch {
  margin-left: 17px;
}

.by {
  font-size: 18.5px;
  color: #dfe1e4;
  margin-left: 5px;
  margin-top: -3px;
}

.first-by {
  margin-left: 16px;
}

.line-sample {
  width: 96px;
  height: 2px;
  margin-left: 3px;
  background: #f0f0f0;
}

.props-title {
  justify-content: flex-start;
  padding-left: 113px;
}

.launcher {
  position: absolute;
  right: 6px;
  top: 9px;
}

.collapsed {
  width: 87px;
  height: 143px;
  flex: none;
  margin: 4px 5px 0 0;
  background: #4b586b;
  display: flex;
  flex-direction: column;
  align-items: center;
  padding-top: 7px;
  box-sizing: border-box;
  position: relative;
}

.ribbon .props + .collapsed {
  margin-left: -2px;
  border-left: 2px solid #232a33;
  width: 89px;
}

.collapsed .lbl {
  margin-top: 6px;
}

.collapsed .caret {
  position: absolute;
  bottom: 6px;
}

.last {
  width: 60px;
  padding-left: 6px;
  border-right: 0;
}

.white-block {
  width: 40px;
  height: 36px;
  margin: 5px 0 0 20px;
  background: #d8d9db;
}

.last .lbl {
  margin-left: 20px;
}

.last .panel-title {
  justify-content: flex-start;
}

.strip {
  height: 6px;
  flex: none;
  background: linear-gradient(#232a33 0 2px, #353e4c 2px);
}

/* drawing area */
.canvas {
  height: 724px;
  flex: none;
  position: relative;
  overflow: hidden;
  background-color: #212830;
  background-image:
    linear-gradient(to right, #333a45 1px, transparent 1px),
    linear-gradient(to bottom, #333a45 1px, transparent 1px),
    linear-gradient(to right, #282f39 1px, transparent 1px),
    linear-gradient(to bottom, #282f39 1px, transparent 1px);
  background-size: 72.9px 72.9px, 72.9px 72.9px, 14.58px 14.58px, 14.58px 14.58px;
  background-position: 64px 38.7px, 64px 38.7px, 6px 9.5px, 6px 9.5px;
}

.drawing {
  position: absolute;
  left: 0;
  top: 0;
}

.view-label {
  position: absolute;
  left: -21px;
  top: 2px;
  font-size: 20px;
  color: #c9cdd3;
}

.cube-ring {
  position: absolute;
  left: 1682px;
  top: 21px;
  width: 122px;
  height: 122px;
  box-sizing: border-box;
  border: 14px solid #474d59;
  border-radius: 50%;
}

.cube-west {
  position: absolute;
  left: 1676px;
  top: 72px;
  font-size: 18px;
  line-height: 24px;
  color: #a4a9b1;
}

.cube-face {
  position: absolute;
  left: 1717px;
  top: 58px;
  width: 40px;
  height: 51px;
  background: #d8dade;
}

.wcs {
  position: absolute;
  left: 1707px;
  top: 173px;
  width: 40px;
  height: 25px;
  padding-left: 5px;
  border-radius: 4px;
  background: #a9afb8;
  color: #5a6068;
  font-size: 16px;
  line-height: 25px;
}

/* command line */
.command {
  position: absolute;
  left: 290px;
  bottom: 0;
  width: 1147px;
  height: 83px;
  display: flex;
}

.cmd-handle {
  width: 38px;
  flex: none;
  background: #2d3542;
  border-radius: 5px 0 0 0;
  display: flex;
  flex-direction: column;
  align-items: center;
  padding-top: 9px;
  box-sizing: border-box;
}

.dots {
  width: 26px;
  height: 2px;
  background: repeating-linear-gradient(to right, #d8d8d8 0 2px, transparent 2px 4px);
}

.cmd-handle svg:nth-of-type(1) {
  margin-top: 17px;
}

.cmd-handle svg:nth-of-type(2) {
  margin-top: 12px;
}

.cmd-main {
  flex: 1;
  display: flex;
  flex-direction: column;
  font-family: "Liberation Mono", "Noto Sans CJK SC", monospace;
  font-size: 18px;
  color: #111;
}

.cn {
  font-family: "Noto Sans CJK SC", sans-serif;
  font-size: 20px;
}

.cmd-history {
  height: 51px;
  flex: none;
  box-sizing: border-box;
  padding: 19px 0 0 5px;
  line-height: 27px;
  background: #c4c4c4;
  border-bottom: 2px solid #20262e;
  white-space: pre;
}

.cmd-input {
  height: 29px;
  margin-bottom: 3px;
  background: #fff;
  display: flex;
  align-items: center;
  padding-left: 7px;
  position: relative;
  white-space: pre;
  border-radius: 0 0 3px 0;
}

.cmd-input .caret {
  margin-left: 3px;
}

.cmd-input b {
  margin-left: 9px;
  letter-spacing: .3px;
}

.cmd-hint {
  margin-left: 10px;
}

.bracket {
  margin-left: 10px;
}

.pill {
  display: inline-flex;
  align-items: center;
  height: 26px;
  padding: 0 1.5px;
  margin-right: 5px;
  border-radius: 6px;
  background: #dcdcdc;
}

.pill + span:not(.pill) {
  margin-left: -3px;
}

.pill em {
  font-style: normal;
  color: #1b1bb0;
}

.cmd-up {
  position: absolute;
  right: 5px;
  top: 10px;
  width: 0;
  height: 0;
  border-left: 6px solid transparent;
  border-right: 6px solid transparent;
  border-bottom: 7px solid #666;
}

/* layout tabs and status */
.statusrow {
  height: 42px;
  flex: none;
  position: relative;
  display: flex;
  background: #20272f;
  border-top: 1px solid #3a4350;
  box-sizing: border-box;
}

.layout-tabs {
  width: 1070px;
  flex: none;
  display: flex;
  align-items: flex-start;
}

.ltab {
  height: 25px;
  font-size: 18px;
  line-height: 25px;
  color: #a9b0ba;
  background: #2c3440;
  text-align: center;
  box-sizing: border-box;
}

.one {
  width: 70px;
  clip-path: polygon(0 0, 100% 0, 92% 100%, 0 100%);
  text-align: left;
  padding-left: 7px;
}

.two {
  width: 78px;
  margin-left: 3px;
  clip-path: polygon(0 0, 100% 0, 92% 100%, 8% 100%);
}

.plus {
  width: 32px;
  margin-left: 8px;
  font-size: 22px;
  font-weight: 700;
  clip-path: polygon(15% 0, 100% 0, 85% 100%, 0 100%);
}

.statusbar {
  padding-top: 3px;
  display: flex;
  gap: 6px;
}

.sbox {
  height: 36px;
  display: flex;
  background: #3b4453;
}

.model {
  width: 46px;
  justify-content: center;
  align-items: center;
  font-size: 17px;
  font-weight: 700;
  color: #e6e8ea;
}

.cell {
  width: 34.5px;
  height: 36px;
  display: flex;
  align-items: center;
  justify-content: center;
}

.cell.on {
  background: #5b8ac0;
}

.cell.second {
  margin-left: 2px;
}

.cc {
  width: 25px;
}

.lines {
  width: 40px;
  align-items: center;
  padding-left: 5px;
  box-sizing: border-box;
  margin-left: -5px;
}

.ime {
  position: absolute;
  left: 1545px;
  top: -1px;
  width: 183px;
  height: 38px;
  box-sizing: border-box;
  padding-left: 15px;
  background: #f7f9fb;
  display: flex;
  align-items: center;
  gap: 20px;
}

.ime-cn {
  font-size: 21px;
  font-weight: 700;
  color: #1b6fc2;
}

.ime-punct {
  font-size: 22px;
  font-weight: 700;
  color: #1b6fc2;
  width: 18px;
}

.sogou {
  position: absolute;
  left: 1505px;
  top: -7px;
  width: 42px;
  height: 42px;
  border-radius: 6px;
  background: #ea5f25;
  transform: rotate(-14deg);
  text-align: center;
  color: #fff;
  font-family: "Liberation Sans", sans-serif;
  font-size: 40px;
  font-weight: 700;
  line-height: 42px;
}

/* windows taskbar */
.taskbar {
  height: 60px;
  flex: none;
  display: flex;
  align-items: stretch;
  gap: 2px;
  background: #0a2f55;
}

.tb-search {
  width: 50px;
  flex: none;
  display: flex;
  align-items: center;
}

.tile {
  width: 73px;
  flex: none;
  box-sizing: border-box;
  display: flex;
  align-items: center;
  justify-content: center;
  padding-bottom: 4px;
  position: relative;
}

.ie {
  background: #7f6247;
  border-bottom: 3px solid #ff7a12;
}

.ie-e {
  fill: #fff;
  font-family: "Liberation Sans", sans-serif;
  font-size: 28px;
  font-weight: 700;
}

.acad {
  background: #065293;
  border-bottom: 3px solid #7fbdf0;
}

.acad-logo {
  width: 37px;
  height: 37px;
  background: #f4e4dd;
  color: #b0252e;
  text-align: center;
  font-family: "Liberation Sans", sans-serif;
  font-size: 36px;
  font-weight: 700;
  line-height: 37px;
}

.inset::after {
  content: "";
  position: absolute;
  left: 6px;
  right: 6px;
  bottom: 0;
  height: 3px;
  background: #7fbdf0;
}

.yellow {
  background: linear-gradient(to right, #6a8a50 0 12px, #134a6e 12px 67px, transparent 67px);
}

.yellow::after {
  background: #f6ee2a;
}

.tray {
  display: flex;
  align-items: center;
  gap: 14.5px;
  margin-left: 645px;
}

.tray-ime {
  font-size: 24px;
  color: #f2f2f2;
}

.tray-sogou {
  width: 20px;
  height: 23px;
  margin-left: 6px;
  border-radius: 3px;
  background: #e0602a;
  color: #fff;
  text-align: center;
  transform: rotate(-10deg);
  font-family: "Liberation Sans", sans-serif;
  font-size: 22px;
  font-weight: 700;
  line-height: 23px;
}

.clock {
  width: 100px;
  flex: none;
  margin-left: 10px;
  display: flex;
  flex-direction: column;
  align-items: center;
  gap: 4px;
  font-family: "Liberation Sans", sans-serif;
  font-size: 21px;
  line-height: 24px;
  color: #0a1a2c;
}
</style>
